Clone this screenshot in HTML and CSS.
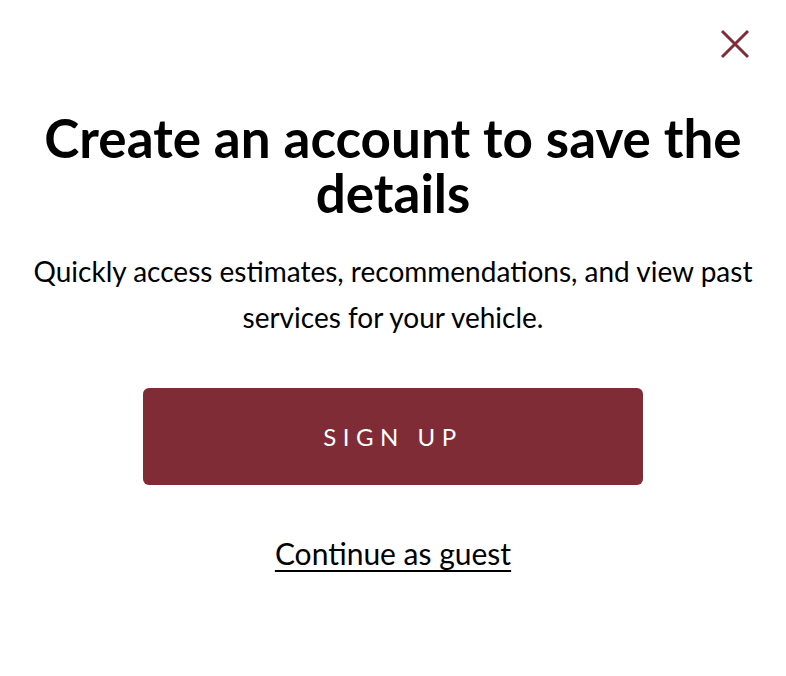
FILE: index.html
```html
<!DOCTYPE html>
<html lang="en">
<head>
<meta charset="utf-8">
<title>Create an account</title>
<link rel="stylesheet" href="styles.css">
</head>
<body>
<div class="modal">
  <div class="topbar">
    <button class="close" aria-label="Close">
      <svg width="30" height="30" viewBox="0 0 30 30"><path d="M2 2 L28 28 M28 2 L2 28" stroke="#7f2c37" stroke-width="3" fill="none"/></svg>
    </button>
  </div>
  <h1 class="title">Create an account to save the details</h1>
  <p class="desc">Quickly access estimates, recommendations, and view past services for your vehicle.</p>
  <button class="signup">SIGN UP</button>
  <a class="guest" href="#">Continue as guest</a>
</div>
</body>
</html>
```
FILE: styles.css
```css
html, body {
  margin: 0;
  padding: 0;
  background: #ffffff;
}
body {
  font-family: "Lato", "Noto Sans", sans-serif;
  color: #000;
}
.modal {
  width: 786px;
  height: 676px;
  box-sizing: border-box;
  display: flex;
  flex-direction: column;
  align-items: center;
}
.topbar {
  align-self: stretch;
  display: flex;
  justify-content: flex-end;
  padding: 29px 36px 0 0;
  height: 30px;
}
.close {
  border: 0;
  background: none;
  padding: 0;
  width: 30px;
  height: 30px;
  cursor: pointer;
}
.close svg { display: block; }
.title {
  margin: 51px 0 0;
  width: 740px;
  text-align: center;
  font-size: 53px;
  line-height: 55px;
  font-weight: 700;
}
.desc {
  margin: 28px 0 0;
  width: 760px;
  text-align: center;
  font-size: 28px;
  line-height: 46px;
  font-weight: 400;
}
.signup {
  margin-top: 48px;
  width: 500px;
  height: 97px;
  border: 0;
  border-radius: 6px;
  background: #7f2c37;
  color: #fff;
  font-family: "Lato", "Noto Sans", sans-serif;
  font-size: 24px;
  letter-spacing: 6.5px;
  padding-left: 6px;
}
.guest {
  margin-top: 50px;
  font-size: 30px;
  line-height: 36px;
  color: #000;
  text-decoration: underline;
  text-underline-offset: 5px;
  text-decoration-thickness: 2px;
}
```
